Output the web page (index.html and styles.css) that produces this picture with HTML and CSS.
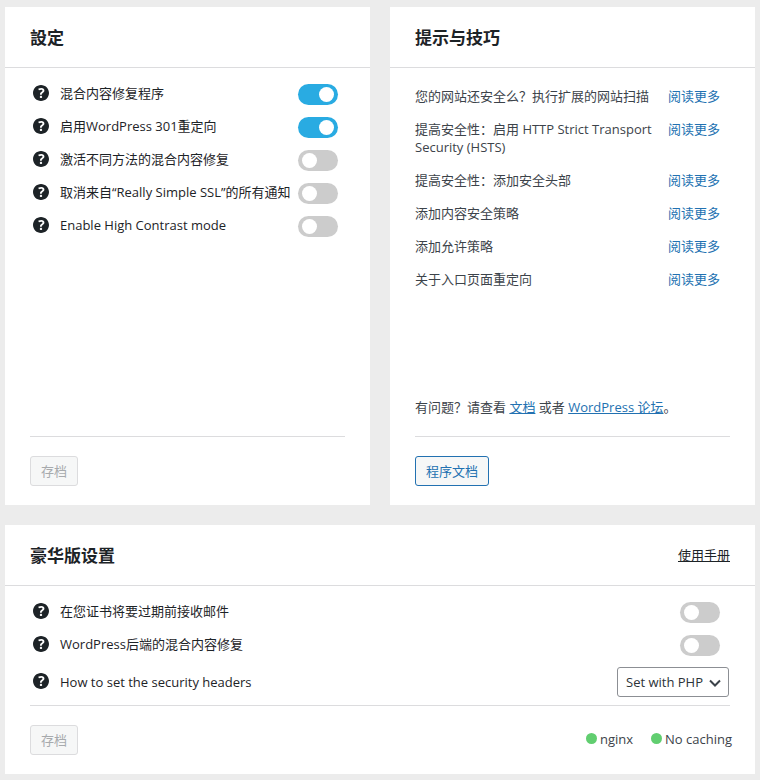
FILE: index.html
```html
<!DOCTYPE html>
<html lang="zh-CN">
<head>
    <meta charset="UTF-8">
    <meta name="viewport" content="width=device-width, initial-scale=1.0">
    <title>Really Simple SSL</title>
    <link rel="stylesheet" href="styles.css">
</head>
<body>
    <!-- shared help icon -->
    <svg class="sprite" aria-hidden="true">
        <symbol id="help" viewBox="3 3 14 14">
            <path d="M17 10c0-3.87-3.14-7-7-7-3.87 0-7 3.13-7 7s3.13 7 7 7c3.86 0 7-3.13 7-7zm-6.3 1.48H9.14v-.43c0-.38.08-.7.24-.98s.46-.57.88-.89c.41-.29.68-.53.81-.71.14-.18.2-.39.2-.62 0-.25-.09-.44-.28-.58-.19-.13-.45-.19-.79-.19-.58 0-1.25.19-2 .57l-.64-1.28c.87-.49 1.8-.74 2.77-.74.81 0 1.45.2 1.92.58.48.39.71.91.71 1.55 0 .43-.09.8-.29 1.11-.19.32-.57.67-1.11 1.06-.38.28-.61.49-.71.63-.1.15-.15.34-.15.57v.35zm-1.47 2.74c-.18-.17-.27-.42-.27-.73 0-.33.08-.58.26-.75s.43-.25.77-.25c.32 0 .57.09.75.26s.27.42.27.74c0 .3-.09.55-.27.72-.18.18-.43.27-.75.27-.33 0-.58-.09-.76-.26z"/>
        </symbol>
    </svg>

    <main class="grid">
        <section class="card">
            <div class="card-header">
                <h2 lang="zh-TW">設定</h2>
            </div>
            <div class="card-body">
                <div class="row">
                    <svg class="help"><use href="#help"/></svg>
                    <label for="mixed">混合内容修复程序</label>
                    <input class="switch" type="checkbox" id="mixed" checked>
                </div>
                <div class="row">
                    <svg class="help"><use href="#help"/></svg>
                    <label for="redirect">启用WordPress 301重定向</label>
                    <input class="switch" type="checkbox" id="redirect" checked>
                </div>
                <div class="row">
                    <svg class="help"><use href="#help"/></svg>
                    <label for="method">激活不同方法的混合内容修复</label>
                    <input class="switch" type="checkbox" id="method">
                </div>
                <div class="row">
                    <svg class="help"><use href="#help"/></svg>
                    <label for="notices">取消来自“Really Simple SSL”的所有通知</label>
                    <input class="switch" type="checkbox" id="notices">
                </div>
                <div class="row">
                    <svg class="help"><use href="#help"/></svg>
                    <label for="contrast">Enable High Contrast mode</label>
                    <input class="switch" type="checkbox" id="contrast">
                </div>
            </div>
            <div class="card-footer">
                <button class="button" type="button" disabled>存档</button>
            </div>
        </section>

        <section class="card">
            <div class="card-header">
                <h2>提示与技巧</h2>
            </div>
            <div class="card-body">
                <ul class="tips">
                    <li><span>您的网站还安全么？执行扩展的网站扫描</span><a href="#">阅读更多</a></li>
                    <li><span>提高安全性：启用 HTTP Strict Transport Security (HSTS)</span><a href="#">阅读更多</a></li>
                    <li><span>提高安全性：添加安全头部</span><a href="#">阅读更多</a></li>
                    <li><span>添加内容安全策略</span><a href="#">阅读更多</a></li>
                    <li><span>添加允许策略</span><a href="#">阅读更多</a></li>
                    <li><span>关于入口页面重定向</span><a href="#">阅读更多</a></li>
                </ul>
                <p class="support">有问题？请查看 <a href="#">文档</a> 或者 <a href="#">WordPress 论坛</a>。</p>
            </div>
            <div class="card-footer">
                <button class="button button-secondary" type="button">程序文档</button>
            </div>
        </section>

        <section class="card card-wide">
            <div class="card-header">
                <h2>豪华版设置</h2>
                <a class="manual" href="#">使用手册</a>
            </div>
            <div class="card-body">
                <div class="row">
                    <svg class="help"><use href="#help"/></svg>
                    <label for="expiry">在您证书将要过期前接收邮件</label>
                    <input class="switch" type="checkbox" id="expiry">
                </div>
                <div class="row">
                    <svg class="help"><use href="#help"/></svg>
                    <label for="backend">WordPress后端的混合内容修复</label>
                    <input class="switch" type="checkbox" id="backend">
                </div>
                <div class="row row-select">
                    <svg class="help"><use href="#help"/></svg>
                    <label for="headers">How to set the security headers</label>
                    <div class="select">
                        <select id="headers">
                            <option>Set with PHP</option>
                        </select>
                        <svg class="chevron" viewBox="0 0 12 12"><path d="M1 3.500l5 5 5-5"/></svg>
                    </div>
                </div>
            </div>
            <div class="card-footer">
                <button class="button" type="button" disabled>存档</button>
                <div class="status">
                    <span>nginx</span>
                    <span>No caching</span>
                </div>
            </div>
        </section>
    </main>
</body>
</html>
```

FILE: styles.css
```css
* {
    box-sizing: border-box;
}
body {
    margin: 0;
    padding: 7px 5px 5px;
    background: #ececec;
    color: #3c434a;
    font-family: "Segoe UI", "Open Sans", "Noto Sans CJK SC", sans-serif;
    font-size: 13px;
    line-height: 18px;
}
.sprite {
    display: none;
}
.grid {
    display: grid;
    grid-template-columns: 1fr 1fr;
    gap: 20px;
}
.card {
    display: flex;
    flex-direction: column;
    background: #fff;
}
.card-wide {
    grid-column: 1 / -1;
}
.card-header {
    display: flex;
    align-items: center;
    justify-content: space-between;
    height: 61px;
    padding: 0 25px;
    border-bottom: 1px solid #dcdcde;
}
h2 {
    margin: 2px 0 0;
    font-size: 17px;
    line-height: 24px;
    font-weight: 700;
    color: #1d2327;
}
.manual {
    color: #1d2327;
}
.card-body {
    display: flex;
    flex-direction: column;
    flex: 1;
    min-height: 368px;
    padding: 10px 25px 0;
}
.card-wide .card-body {
    min-height: 0;
    padding-bottom: 3px;
}
.card-footer {
    display: flex;
    align-items: center;
    justify-content: space-between;
    margin: 0 25px;
    padding: 19px 0;
    border-top: 1px solid #dcdcde;
}

/* Settings rows */
.row {
    display: flex;
    align-items: center;
    min-height: 33px;
    padding: 0 7px 0 3px;
    color: #1d2327;
}
.row label {
    flex: 1;
    margin: 0 0 3px 11px;
    white-space: nowrap;
}
.card-wide .row {
    padding-right: 10px;
}
.card-wide .row-select {
    min-height: 40px;
    padding-right: 1px;
}
.row-select label {
    margin-bottom: 0;
}
.help {
    width: 16px;
    height: 16px;
    margin-bottom: 3px;
    fill: #1d2327;
}
.switch {
    appearance: none;
    flex: none;
    display: flex;
    align-items: center;
    width: 40px;
    height: 21px;
    margin: 0;
    padding: 0 4px;
    border-radius: 11px;
    background: #ccc;
    cursor: pointer;
}
.switch::before {
    content: "";
    width: 15px;
    height: 15px;
    border-radius: 50%;
    background: #fff;
}
.switch:checked {
    justify-content: flex-end;
    background: #29abe2;
}
.select {
    position: relative;
}
select {
    appearance: none;
    height: 30px;
    padding: 0 24px 0 8px;
    border: 1px solid #8c8f94;
    border-radius: 3px;
    background: #fff;
    color: #2c3338;
    font: inherit;
}
.chevron {
    position: absolute;
    top: 10px;
    right: 8px;
    width: 12px;
    height: 12px;
    fill: none;
    stroke: #3c434a;
    stroke-width: 2;
    pointer-events: none;
}

/* Tips */
.tips {
    margin: 0;
    padding: 9px 0 0;
    list-style: none;
}
.tips li {
    display: grid;
    grid-template-columns: 1fr 62px;
    gap: 15px;
    margin-bottom: 15px;
}
.tips a {
    text-decoration: none;
}
a {
    color: #2271b1;
}
.support {
    margin: auto 0 20px;
}

.button {
    height: 30px;
    padding: 0 10px;
    border: 1px solid #dcdcde;
    border-radius: 3px;
    background: #f6f7f7;
    color: #a7aaad;
    font: inherit;
}
.button-secondary {
    border-color: #2271b1;
    color: #2271b1;
    cursor: pointer;
}
.status {
    display: flex;
    gap: 18px;
    margin: 0 -2px 3px 0;
}
.status span {
    display: flex;
    align-items: center;
    gap: 3px;
}
.status span::before {
    content: "";
    width: 11px;
    height: 11px;
    border-radius: 50%;
    background: #61ce70;
}
```
